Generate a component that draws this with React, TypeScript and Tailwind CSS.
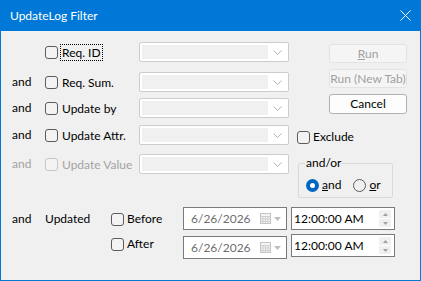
import React from "react";

const font = { fontFamily: "Lato, 'Noto Sans', 'Liberation Sans', sans-serif" };

function Check({ disabled = false }: { disabled?: boolean }) {
  return (
    <span
      className={
        "inline-block w-[13px] h-[13px] rounded-[3px] border shrink-0 " +
        (disabled ? "border-[#c6c6c6] bg-[#f3f3f3]" : "border-[#5c5c5c] bg-[#f3f3f3]")
      }
    />
  );
}

function Combo() {
  return (
    <div className="flex w-[150px] h-[20px] border border-[#cccccc] rounded-[2px] bg-white p-[2px]">
      <div className="flex-1 bg-[#f0f0f0]" />
      <div className="w-[18px] flex items-center justify-center">
        <svg width="9" height="5" viewBox="0 0 9 5">
          <path d="M0.5 0.5 L4.5 4.5 L8.5 0.5" fill="none" stroke="#b4b4b4" strokeWidth="1" />
        </svg>
      </div>
    </div>
  );
}

function Row({
  and,
  label,
  disabled = false,
  focus = false,
  mt,
}: {
  and: boolean;
  label: string;
  disabled?: boolean;
  focus?: boolean;
  mt: string;
}) {
  return (
    <div className={"flex items-center h-[20px] " + mt}>
      <div className={"w-[33px] " + (disabled ? "text-[#a3a3a3]" : "text-black")}>{and ? "and" : ""}</div>
      <div className="w-[94px] flex items-center">
        <Check disabled={disabled} />
        <span
          className={
            "ml-[2px] px-[1px] leading-[15px] " +
            (focus ? "border border-dotted border-black " : "border border-transparent ") +
            (disabled ? "text-[#a3a3a3]" : "text-black")
          }
        >
          {label}
        </span>
      </div>
      <Combo />
    </div>
  );
}

function Radio({ on }: { on: boolean }) {
  return on ? (
    <span className="inline-flex w-[13px] h-[13px] rounded-full bg-[#0067c0] items-center justify-center shrink-0">
      <span className="w-[5px] h-[5px] rounded-full bg-white" />
    </span>
  ) : (
    <span className="inline-block w-[13px] h-[13px] rounded-full border border-[#5c5c5c] shrink-0" />
  );
}

function DateBox({ mt }: { mt: string }) {
  return (
    <div className={"flex items-center w-[104px] h-[23px] border border-[#7a7a7a] bg-white " + mt}>
      <span className="ml-[7px] flex-1 text-[#6d6d6d]">6/26/2026</span>
      <svg width="11" height="11" viewBox="0 0 11 11" className="mr-[3px]">
        <rect x="0.5" y="0.5" width="10" height="10" fill="#f4f4f4" stroke="#c4c4c4" />
        <path d="M0.5 3.5H10.5M0.5 6H10.5M0.5 8.5H10.5M3 3.5V10.5M5.5 3.5V10.5M8 3.5V10.5" stroke="#d0d0d0" strokeWidth="1" />
      </svg>
      <svg width="7" height="4" viewBox="0 0 7 4" className="mr-[5px]">
        <path d="M0 0H7L3.5 4Z" fill="#c0c0c0" />
      </svg>
    </div>
  );
}

function TimeBox({ mt }: { mt: string }) {
  return (
    <div className={"flex items-center w-[104px] h-[23px] border border-[#7a7a7a] bg-white " + mt}>
      <span className="ml-[2px] flex-1 text-black">12:00:00 AM</span>
      <div className="flex flex-col mr-[3px] gap-[1px]">
        <div className="w-[12px] h-[8px] bg-[#f0f0f0] flex items-center justify-center">
          <svg width="5" height="3" viewBox="0 0 5 3">
            <path d="M0 3H5L2.5 0Z" fill="#a0a0a0" />
          </svg>
        </div>
        <div className="w-[12px] h-[8px] bg-[#f0f0f0] flex items-center justify-center">
          <svg width="5" height="3" viewBox="0 0 5 3">
            <path d="M0 0H5L2.5 3Z" fill="#a0a0a0" />
          </svg>
        </div>
      </div>
    </div>
  );
}

export default function App() {
  return (
    <div className="w-[421px] h-[281px] bg-[#0078d7] flex flex-col text-[12px]" style={font}>
      <div className="h-[31px] flex items-center justify-between shrink-0">
        <span className="ml-[10px] text-white text-[12px]">UpdateLog Filter</span>
        <svg width="11" height="11" viewBox="0 0 11 11" className="mr-[10px]">
          <path d="M0.5 0.5L10.5 10.5M10.5 0.5L0.5 10.5" stroke="white" strokeWidth="1" />
        </svg>
      </div>
      <div className="flex-1 mx-[1px] mb-[1px] bg-[#f0f0f0] flex flex-col">
        <div className="flex h-[166px]">
          <div className="flex flex-col pl-[11px] pt-[11px]">
            <Row and={false} label="Req. ID" focus mt="mt-0" />
            <Row and label="Req. Sum." mt="mt-[10px]" />
            <Row and label="Update by" mt="mt-[6px]" />
            <Row and label="Update Attr." mt="mt-[7px]" />
            <Row and label="Update Value" disabled mt="mt-[9px]" />
          </div>
          <div className="flex flex-col pl-[8px] pt-[13px]">
            <div className="ml-[32px] w-[78px] h-[19px] border border-[#e3e3e3] rounded-[3px] bg-[#f5f5f5] flex items-center justify-center text-[#a0a0a0]">
              <span>
                <span className="underline">R</span>un
              </span>
            </div>
            <div className="ml-[32px] mt-[6px] w-[78px] h-[19px] border border-[#e3e3e3] rounded-[3px] bg-[#f5f5f5] flex items-center justify-center text-[#a0a0a0]">
              Run (New Tab)
            </div>
            <div className="ml-[32px] mt-[6px] w-[78px] h-[20px] border border-[#b0b0b0] rounded-[3px] bg-[#fdfdfd] flex items-center justify-center text-black">
              Cancel
            </div>
            <div className="mt-[14px] flex items-center">
              <Check />
              <span className="ml-[3px] text-black">Exclude</span>
            </div>
            <fieldset className="mt-[10px] ml-[1px] w-[95px] h-[42px] border border-[#d9d9d9] rounded-[2px] px-[7px] pb-[4px] shrink-0">
              <legend className="px-[1px] -ml-[1px] leading-[14px] text-black">and/or</legend>
              <div className="flex items-center mt-[6px]">
                <Radio on />
                <span className="ml-[3px] text-black">
                  <span className="underline">a</span>nd
                </span>
                <span className="ml-[12px] flex">
                  <Radio on={false} />
                </span>
                <span className="ml-[3px] text-black">
                  <span className="underline">o</span>r
                </span>
              </div>
            </fieldset>
          </div>
        </div>
        <div className="flex pl-[11px] mt-[10px]">
          <div className="w-[33px] mt-[5px] h-[14px] leading-[14px] text-black">and</div>
          <div className="w-[66px] mt-[5px] h-[14px] leading-[14px] text-black">Updated</div>
          <div className="w-[72px] flex flex-col">
            <div className="flex items-center h-[14px] mt-[5px]">
              <Check />
              <span className="ml-[3px] text-black">Before</span>
            </div>
            <div className="flex items-center h-[14px] mt-[11px]">
              <Check />
              <span className="ml-[3px] text-black">After</span>
            </div>
          </div>
          <div className="flex flex-col">
            <DateBox mt="mt-0" />
            <DateBox mt="mt-[6px]" />
          </div>
          <div className="flex flex-col ml-[4px]">
            <TimeBox mt="mt-0" />
            <TimeBox mt="mt-[4px]" />
          </div>
        </div>
      </div>
    </div>
  );
}
